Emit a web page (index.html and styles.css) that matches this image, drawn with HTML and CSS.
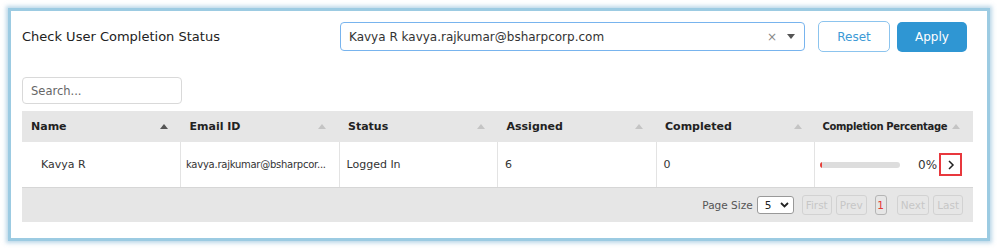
FILE: index.html
```html
<!DOCTYPE html>
<html lang="en">
<head>
    <meta charset="UTF-8">
    <title>Check User Completion Status</title>
    <link rel="stylesheet" href="styles.css">
</head>
<body>
    <div class="card">
        <div class="toolbar">
            <h2 class="title">Check User Completion Status</h2>
            <div class="user-select">
                <span class="user-value">Kavya R kavya.rajkumar@bsharpcorp.com</span>
                <span class="clear">×</span>
                <span class="caret"></span>
            </div>
            <button class="btn btn-outline">Reset</button>
            <button class="btn btn-primary">Apply</button>
        </div>

        <input type="text" class="search" placeholder="Search...">

        <div class="grid">
            <table>
                <thead>
                    <tr>
                        <th><div class="th-inner"><span>Name</span><i class="sort active"></i></div></th>
                        <th><div class="th-inner"><span>Email ID</span><i class="sort"></i></div></th>
                        <th><div class="th-inner"><span>Status</span><i class="sort"></i></div></th>
                        <th><div class="th-inner"><span>Assigned</span><i class="sort"></i></div></th>
                        <th><div class="th-inner"><span>Completed</span><i class="sort"></i></div></th>
                        <th class="th-pct"><div class="th-inner"><span>Completion Percentage</span><i class="sort"></i></div></th>
                    </tr>
                </thead>
                <tbody>
                    <tr>
                        <td class="name-cell">Kavya R</td>
                        <td class="email-cell">kavya.rajkumar@bsharpcor...</td>
                        <td>Logged In</td>
                        <td>6</td>
                        <td>0</td>
                        <td>
                            <div class="progress-cell">
                                <div class="progress"><div class="progress-fill" style="width: 2%"></div></div>
                                <span class="pct">0%</span>
                                <span class="detail">
                                    <svg width="10" height="12" viewBox="0 0 10 12"><path d="M3 2 L7 6 L3 10" fill="none" stroke="#222" stroke-width="1.5"/></svg>
                                </span>
                            </div>
                        </td>
                    </tr>
                </tbody>
            </table>
            <div class="pager">
                <span class="pager-label">Page Size</span>
                <div class="page-size">
                    <span>5</span>
                    <svg width="9" height="6" viewBox="0 0 9 6"><path d="M1 1 L4.5 4.5 L8 1" fill="none" stroke="#222" stroke-width="1.8"/></svg>
                </div>
                <button class="page-btn">First</button>
                <button class="page-btn">Prev</button>
                <button class="page-btn current">1</button>
                <button class="page-btn">Next</button>
                <button class="page-btn">Last</button>
            </div>
        </div>
    </div>
</body>
</html>
```

FILE: styles.css
```css
body {
    margin: 0;
    padding: 8px;
    background: #fff;
    font-family: "DejaVu Sans", sans-serif;
    color: #333;
}

.card {
    box-sizing: border-box;
    width: 982px;
    height: 233px;
    border: 3px solid #9ccbe2;
    box-shadow: 0 0 4px 2px rgba(120, 175, 210, 0.5);
    padding: 10px 14px 0 11px;
    background: #fff;
}

.toolbar {
    display: flex;
    align-items: center;
    height: 31px;
}

.title {
    width: 318px;
    margin: 0;
    font-size: 13px;
    font-weight: normal;
    color: #222;
}

.user-select {
    box-sizing: border-box;
    width: 465px;
    height: 29px;
    border: 1px solid #78b4ee;
    border-radius: 4px;
    display: flex;
    align-items: center;
    padding: 0 9px 0 8px;
    font-size: 12px;
    color: #333;
}

.user-value {
    flex: 1;
}

.clear {
    color: #888;
    font-size: 12px;
    margin-right: 10px;
}

.caret {
    width: 0;
    height: 0;
    border-left: 4px solid transparent;
    border-right: 4px solid transparent;
    border-top: 5px solid #555;
}

.btn {
    box-sizing: border-box;
    height: 31px;
    border-radius: 5px;
    font-family: inherit;
    font-size: 12px;
}

.btn-outline {
    width: 72px;
    margin-left: 13px;
    background: #fff;
    border: 1px solid #8cc4ee;
    color: #3c9ad6;
}

.btn-primary {
    width: 70px;
    margin-left: 7px;
    height: 30px;
    background: #2f96d3;
    border: none;
    color: #fff;
}

.search {
    display: block;
    box-sizing: border-box;
    width: 160px;
    height: 27px;
    margin-top: 25px;
    border: 1px solid #d9d9d9;
    border-radius: 4px;
    padding: 0 8px;
    font-family: inherit;
    font-size: 11.5px;
    color: #333;
}

.search::placeholder {
    color: #666;
}

.grid {
    width: 951px;
    margin-top: 7px;
    background: #e6e6e6;
}

table {
    width: 100%;
    border-collapse: collapse;
    table-layout: fixed;
}

th {
    height: 31px;
    padding: 0 13px 0 9px;
    text-align: left;
    font-size: 11px;
    font-weight: bold;
    color: #222;
    background: #e6e6e6;
    white-space: nowrap;
}

th.th-pct {
    padding-left: 8px;
    font-size: 10px;
    letter-spacing: -0.35px;
}

.th-inner {
    display: flex;
    align-items: center;
    justify-content: space-between;
}

.sort {
    width: 0;
    height: 0;
    border-left: 4px solid transparent;
    border-right: 4px solid transparent;
    border-bottom: 5px solid #c4c4c4;
}

.sort.active {
    border-bottom-color: #555;
}

td {
    height: 45px;
    padding: 0 7px;
    background: #fff;
    border-left: 1px solid #e3e3e3;
    border-bottom: 1px solid #d6d6d6;
    font-size: 11px;
    color: #333;
    white-space: nowrap;
}

td:first-child {
    border-left: none;
}

.name-cell {
    padding-left: 19px;
}

.email-cell {
    padding-left: 5px;
    font-size: 10px;
    letter-spacing: -0.25px;
}

.progress-cell {
    display: flex;
    align-items: center;
    margin-left: -2px;
}

.progress {
    width: 80px;
    height: 6px;
    border-radius: 3px;
    background: #dddddd;
    overflow: hidden;
}

.progress-fill {
    height: 100%;
    background: #e8403a;
}

.pct {
    margin-left: 18px;
    font-size: 12px;
    color: #333;
}

.detail {
    box-sizing: border-box;
    width: 23px;
    height: 23px;
    margin-left: 2px;
    border: 2px solid #e8383d;
    display: flex;
    align-items: center;
    justify-content: center;
}

.pager {
    height: 34px;
    display: flex;
    align-items: center;
    justify-content: flex-end;
    padding-right: 10px;
    font-size: 10.5px;
}

.pager-label {
    color: #555;
    margin-right: 4px;
}

.page-size {
    box-sizing: border-box;
    width: 37px;
    height: 18px;
    background: #fff;
    border: 1px solid #999;
    border-radius: 3px;
    display: flex;
    align-items: center;
    justify-content: space-between;
    padding: 0 4px 0 7px;
    color: #222;
    margin-right: 4px;
}

.page-btn {
    box-sizing: border-box;
    height: 20px;
    padding: 0 3px;
    margin-left: 4px;
    background: #e6e6e6;
    border: 1px solid #d2d2d2;
    border-radius: 3px;
    font-family: inherit;
    font-size: 10.5px;
    color: #c6c6c6;
}

.page-btn.current {
    width: 12px;
    padding: 0;
    margin: 0 6px 0 8px;
    border-color: #b5b5b5;
    color: #e53935;
}
```
